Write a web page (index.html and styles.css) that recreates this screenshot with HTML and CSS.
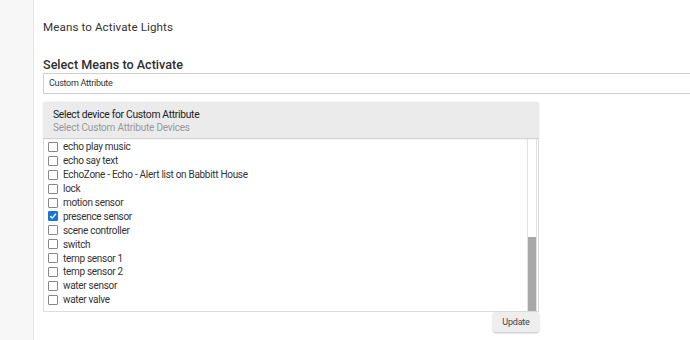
FILE: index.html
```html
<html>
	<head>
		<link rel="stylesheet" href="styles.css">
	</head>
<body>
<div class="page">
	<div class="side"></div>
	<div class="main">
		<div class="title">Means to Activate Lights</div>
		<div class="label">Select Means to Activate</div>
		<div class="select">Custom Attribute<span class="arrow"></span></div>

		<div class="panel">
			<div class="panel-head">
				<div class="head-title">Select device for Custom Attribute</div>
				<div class="head-sub">Select Custom Attribute Devices</div>
			</div>
			<div class="list">
				<div class="items">
					<div class="item"><span class="box"></span>echo play music</div>
					<div class="item"><span class="box"></span>echo say text</div>
					<div class="item"><span class="box"></span>EchoZone - Echo - Alert list on Babbitt House</div>
					<div class="item"><span class="box"></span>lock</div>
					<div class="item"><span class="box"></span>motion sensor</div>
					<div class="item"><span class="box checked"><svg width="8" height="8" viewBox="0 0 8 8"><path d="M1.2 4.2 L3.2 6.1 L6.9 1.8" fill="none" stroke="#fff" stroke-width="1.4"/></svg></span>presence sensor</div>
					<div class="item"><span class="box"></span>scene controller</div>
					<div class="item"><span class="box"></span>switch</div>
					<div class="item"><span class="box"></span>temp sensor 1</div>
					<div class="item"><span class="box"></span>temp sensor 2</div>
					<div class="item"><span class="box"></span>water sensor</div>
					<div class="item"><span class="box"></span>water valve</div>
				</div>
				<div class="scroll"><div class="thumb"></div></div>
			</div>
			<div class="actions"><button class="update">Update</button></div>
		</div>
	</div>
</div>
</body>
</html>
```

FILE: styles.css
```css
body{
	margin: 0px;
	padding: 0px;
	overflow: hidden;
	font-family: Roboto, "Liberation Sans", sans-serif;
	color: #333;
}

.page{
	display: flex;
	height: 340px;
	width: 690px;
	overflow: hidden;
}

.side{
	width: 33px;
	flex: none;
	background-color: #f7f7f7;
	border-right: 1px solid #e6e6e6;
}

.main{
	flex: none;
	width: 660px;
	padding-left: 9px;
}

.title{
	margin-top: 20px;
	font-size: 11.6px;
	letter-spacing: 0.1px;
	color: #333;
	height: 15px;
	line-height: 15px;
}

.label{
	margin-top: 22px;
	font-size: 12.6px;
	font-weight: 500;
	color: #2e2e2e;
	height: 15px;
	line-height: 15px;
}

.select{
	position: relative;
	width: 652px;
	height: 19px;
	line-height: 19px;
	margin-top: 1px;
	border: 1px solid #cfcfcf;
	border-right: none;
	padding-left: 5px;
	font-size: 9px;
	letter-spacing: -0.3px;
	color: #333;
}

.arrow{
	position: absolute;
	right: 5px;
	top: 9px;
	width: 2px;
	height: 2px;
	background: #888;
}

.panel{
	margin-top: 8px;
	width: 496px;
}

.panel-head{
	background-color: #ebebeb;
	height: 36px;
	border-bottom: 1px solid #d2d2d2;
	padding-left: 10px;
	box-shadow: 0 0 2px rgba(0,0,0,0.12);
	border-radius: 2px 2px 0 0;
}

.head-title{
	padding-top: 6px;
	font-size: 10.3px;
	letter-spacing: -0.3px;
	color: #222;
	height: 13px;
	line-height: 13px;
}

.head-sub{
	font-size: 10px;
	letter-spacing: -0.2px;
	color: #999;
	height: 13px;
	line-height: 13px;
}

.list{
	display: flex;
	height: 172px;
	border: 1px solid #ddd;
	border-top: none;
	overflow: hidden;
}

.items{
	flex: 1;
	padding-left: 4px;
	padding-top: 1px;
}

.item{
	display: flex;
	align-items: center;
	height: 13.9px;
	font-size: 10px;
	letter-spacing: -0.3px;
	color: #333;
}

.box{
	width: 8px;
	height: 8px;
	border: 1px solid #888;
	border-radius: 1px;
	margin-right: 5px;
	display: flex;
	align-items: center;
	justify-content: center;
	background: #fff;
}

.box.checked{
	background: #1976d2;
	border-color: #1976d2;
}

.scroll{
	width: 8px;
	margin-right: 1px;
	border-left: 1px solid #e2e2e2;
	border-right: 1px solid #e2e2e2;
	display: flex;
	flex-direction: column;
	justify-content: flex-end;
}

.thumb{
	height: 74px;
	background-color: #a8a8a8;
}

.actions{
	display: flex;
	justify-content: flex-end;
}

.update{
	width: 46px;
	height: 20px;
	border: none;
	background: #eee;
	font-family: Roboto, "Liberation Sans", sans-serif;
	font-size: 9px;
	letter-spacing: -0.2px;
	color: #444;
	padding: 0;
	box-shadow: 0 1px 2px rgba(0,0,0,0.25);
	border-radius: 2px;
}
```
